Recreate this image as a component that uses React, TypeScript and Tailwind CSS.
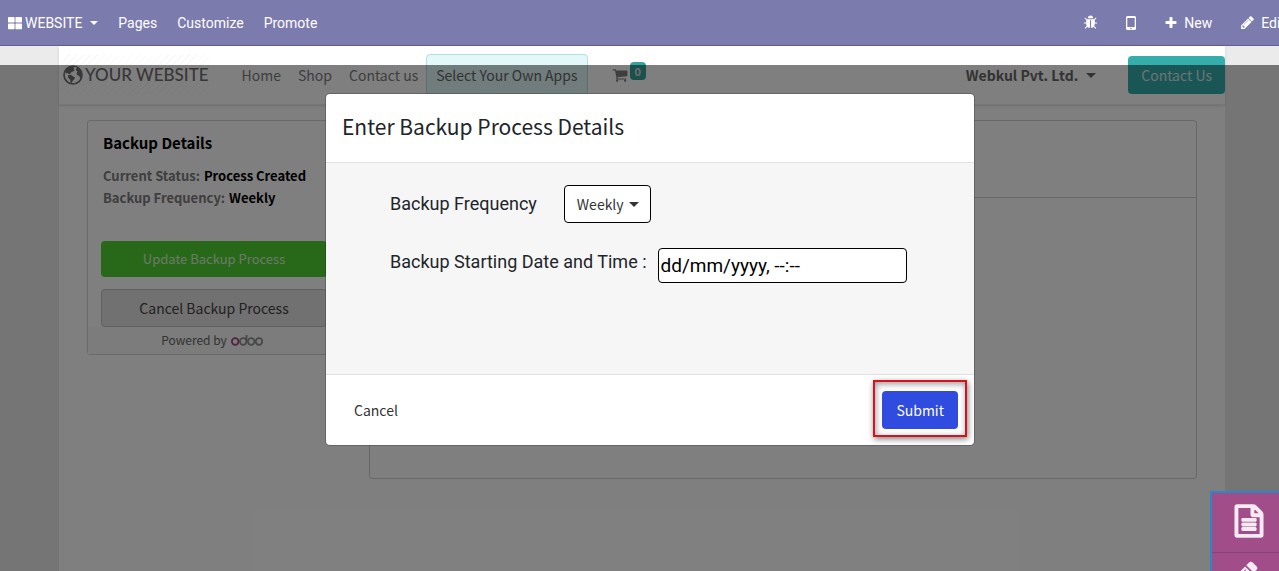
import React from "react";
import { FaThLarge } from "react-icons/fa";

const SITE_FONT = "font-['Noto_Sans_CJK_SC',sans-serif]";

function Glyph({ d, className }: { d: string; className: string }) {
  return (
    <svg viewBox="0 0 1792 1792" fill="currentColor" aria-hidden="true" className={className}>
      <path d={d} />
    </svg>
  );
}

const BUG =
  "M1696 960q0 26-19 45t-45 19h-224q0 171-67 290l208 209q19 19 19 45t-19 45q-18 19-45 19t-45-19l-198-197q-5 5-15 13t-42 28.5-65 36.5-82 29-97 13v-896h-128v896q-51 0-101.5-13.5t-87-33-66-39-43.5-32.5l-15-14-183 207q-20 21-48 21-24 0-43-16-19-18-20.5-44.5t15.5-46.5l202-227q-58-114-58-274h-224q-26 0-45-19t-19-45 19-45 45-19h224v-294l-173-173q-19-19-19-45t19-45 45-19 45 19l173 173h844l173-173q19-19 45-19t45 19 19 45-19 45l-173 173v294h224q26 0 45 19t19 45zm-480-576h-640q0-133 93.5-226.5t226.5-93.5 226.5 93.5 93.5 226.5z";
const FILE =
  "M1596 380q28 28 48 76t20 88v1152q0 40-28 68t-68 28h-1344q-40 0-68-28t-28-68v-1600q0-40 28-68t68-28h896q40 0 88 20t76 48zm-444-244v376h376q-10-29-22-41l-313-313q-12-12-41-22zm384 1528v-1024h-416q-40 0-68-28t-28-68v-416h-768v1536h1280zm-1024-864q0-14 9-23t23-9h704q14 0 23 9t9 23v64q0 14-9 23t-23 9h-704q-14 0-23-9t-9-23v-64zm736 224q14 0 23 9t9 23v64q0 14-9 23t-23 9h-704q-14 0-23-9t-9-23v-64q0-14 9-23t23-9h704zm0 256q14 0 23 9t9 23v64q0 14-9 23t-23 9h-704q-14 0-23-9t-9-23v-64q0-14 9-23t23-9h704z";
const CART =
  "M704 1536q0 52-38 90t-90 38-90-38-38-90 38-90 90-38 90 38 38 90zm896 0q0 52-38 90t-90 38-90-38-38-90 38-90 90-38 90 38 38 90zm128-1088v512q0 24-16.5 42.5t-40.5 21.5l-1044 122q13 60 13 70 0 16-24 64h920q26 0 45 19t19 45-19 45-45 19h-1024q-26 0-45-19t-19-45q0-11 8-31.5t16-36 21.5-40 15.5-29.5l-177-823h-204q-26 0-45-19t-19-45 19-45 45-19h256q16 0 28.5 6.5t19.5 15.5 13 24.5 8 26 5.5 29.5 4.5 26h1201q26 0 45 19t19 45z";
const PENCIL =
  "M491 1536l91-91-235-235-91 91v107h128v128h107zm523-928q0-22-22-22-10 0-17 7l-542 542q-7 7-7 17 0 22 22 22 10 0 17-7l542-542q7-7 7-17zm-54-192l416 416-832 832h-416v-416zm683 96q0 53-37 90l-166 166-416-416 166-165q36-38 90-38 53 0 91 38l235 234q37 39 37 91z";
const PLUS =
  "M1600 736v192q0 40-28 68t-68 28h-416v416q0 40-28 68t-68 28h-192q-40 0-68-28t-28-68v-416h-416q-40 0-68-28t-28-68v-192q0-40 28-68t68-28h416v-416q0-40 28-68t68-28h192q40 0 68 28t28 68v416h416q40 0 68 28t28 68z";

function Caret({ className = "" }: { className?: string }) {
  return (
    <svg viewBox="0 0 10 5" fill="currentColor" aria-hidden="true" className={`shrink-0 ${className}`}>
      <path d="M0 0h10L5 5z" />
    </svg>
  );
}

function TopBar() {
  return (
    <nav className="flex h-[46px] shrink-0 items-center justify-between border-b border-[#5f5e97] bg-[#7c7bad] pl-2 font-[Roboto,sans-serif] text-sm text-white">
      <div className="flex items-center gap-5">
        <button className="flex items-center">
          <FaThLarge className="mr-[3px] size-[14px]" />
          WEBSITE
          <Caret className="ml-2 h-1 w-2" />
        </button>
        <a href="#pages">Pages</a>
        <a href="#customize">Customize</a>
        <a href="#promote">Promote</a>
      </div>
      <div className="-mr-[6px] flex items-center">
        <button aria-label="Debug" className="mr-7">
          <Glyph d={BUG} className="size-[15px]" />
        </button>
        <button aria-label="Mobile preview" className="mr-7">
          <svg viewBox="0 0 10 14" className="h-[14px] w-[10px]" aria-hidden="true">
            <path
              fill="currentColor"
              fillRule="evenodd"
              d="M1.5 0h7A1.5 1.5 0 0 1 10 1.5v11A1.5 1.5 0 0 1 8.500 14h-7A1.5 1.5 0 0 1 0 12.500v-11A1.500 1.500 0 0 1 1.500 0zM1.300 2v9h7.400V2zM5 11.700a.8.8 0 1 0 0 1.600.8.8 0 0 0 0-1.600z"
            />
          </svg>
        </button>
        <button className="mr-7 flex items-center gap-[6px]">
          <Glyph d={PLUS} className="size-[14px]" />
          New
        </button>
        <button className="flex items-center gap-[6px]">
          <Glyph d={PENCIL} className="size-[15px]" />
          Edit
        </button>
      </div>
    </nav>
  );
}

function SiteHeader() {
  return (
    <header className="flex h-[59px] items-center justify-between border-b border-[#ececec] pl-1 text-sm text-[#7c7c7c] shadow-sm">
      <div className="flex items-center">
        <a
          href="#home"
          className="mr-[33px] flex h-10 items-center gap-[2px] bg-[repeating-linear-gradient(135deg,#fff_0_4px,#f8f8f8_4px_5px)] font-[Lato,sans-serif] text-[17px] text-[#6e6e6e]"
        >
          <svg viewBox="0 0 20 20" className="size-5" aria-hidden="true">
            <circle cx="10" cy="10" r="9" fill="none" stroke="currentColor" strokeWidth="1.600" />
            <path
              fill="currentColor"
              d="M2.500 6 5.500 2.500l3.500-1 2.500 1-.8 1.500 1 1-1.700 1.600-1.800.6-.8 1.500-1.400.5-1.500-1.200-1.800.6zM4.800 10.200l3-.4 2.200 1.400 1.800 1-.4 2-1.500 1.200-1 2.300-1.100.2-.8-3.300-1.700-1.600zM13 3.200l2-.3 2.400 2.600 1.200 3.300-.1 3-1.300 2.300-.9-3.200-1.700-.6-1.200-1.900 1.100-1.800-1.500-1z"
            />
          </svg>
          <span className="font-medium">YOUR WEBSITE</span>
        </a>
        <nav className="flex items-center gap-[17px]">
          <a href="#home">Home</a>
          <a href="#shop">Shop</a>
          <a href="#contact">Contact us</a>
        </nav>
        <a
          href="#apps"
          className="ml-2 rounded border border-[#b3dfde] bg-[#e2f8f9] px-[9px] py-[10px] text-[#666]"
        >
          Select Your Own Apps
        </a>
        <a href="#cart" aria-label="Cart" className="ml-6 flex items-center gap-[2px]">
          <Glyph d={CART} className="size-4" />
          <span className="mb-2 rounded bg-[#35a39b] px-[5px] text-[11px] leading-[18px] font-bold text-[#ddd]">0</span>
        </a>
      </div>
      <div className="flex items-center gap-8">
        <button className="flex items-center gap-2 font-bold text-[#666]">
          Webkul Pvt. Ltd.
          <Caret className="h-[5px] w-[10px]" />
        </button>
        <button className="h-[38px] rounded bg-[#35adab] px-[13px] text-[#d8e8e8]">Contact Us</button>
      </div>
    </header>
  );
}

function OdooLogo() {
  return (
    <svg viewBox="0 0 32 12" className="h-3 w-8" role="img" aria-label="odoo" fill="none" strokeWidth="1.800">
      <circle cx="4.200" cy="7.500" r="3.300" stroke="#a24689" />
      <g stroke="#8f8f8f">
        <circle cx="12.200" cy="7.500" r="3.300" />
        <path d="M15.500 7.500V1" />
        <circle cx="20.200" cy="7.500" r="3.300" />
        <circle cx="28" cy="7.500" r="3.300" />
      </g>
    </svg>
  );
}

function BackupCard() {
  return (
    <section className="w-[254px] shrink-0 rounded-[3px] border border-[#d5d5d5]">
      <div className="px-[13px] pt-2">
        <div className="px-[2px]">
          <h2 className="text-[15px] leading-7 font-bold text-black">Backup Details</h2>
          <dl className="mt-2 text-[13px] leading-[22px] font-bold text-black">
            <div className="flex gap-1">
              <dt className="text-[#7c7c7c]">Current Status:</dt>
              <dd>Process Created</dd>
            </div>
            <div className="flex gap-1">
              <dt className="text-[#7c7c7c]">Backup Frequency:</dt>
              <dd>Weekly</dd>
            </div>
          </dl>
        </div>
        <button className="mt-8 block h-9 w-full rounded bg-[#50d233] text-[13px] text-[#d9f2d3]">
          Update Backup Process
        </button>
        <button className="mt-3 block h-[38px] w-full rounded border border-[#c0c0c0] bg-[#e2e2e2] text-sm text-[#444]">
          Cancel Backup Process
        </button>
      </div>
      <footer className="flex h-[27px] items-center justify-center gap-1 bg-[#f8f8f8] pr-1 pb-[2px] text-xs text-[#666]">
        Powered by
        <OdooLogo />
      </footer>
    </section>
  );
}

function BackupDialog() {
  return (
    <div
      role="dialog"
      aria-labelledby="dialog-title"
      className="w-full max-w-[648px] overflow-hidden rounded bg-white text-base text-[#333] shadow-[0_0_0_1px_rgba(0,0,0,0.2)]"
    >
      <header className="border-b border-[#dee2e6] px-4 pt-4 pb-5">
        <h1 id="dialog-title" className="text-[21px] leading-8 text-[#212529]">
          Enter Backup Process Details
        </h1>
      </header>
      <div className="flex h-[211px] flex-col gap-[25px] bg-[#f6f6f6] px-16 pt-[22px]">
        <div className="flex items-center gap-[27px]">
          <label htmlFor="frequency" className="font-[Roboto,sans-serif] text-lg text-[#212529]">
            Backup Frequency
          </label>
          <div className="grid h-[38px] w-[87px] items-center">
            <select
              id="frequency"
              className="col-start-1 row-start-1 h-full w-full appearance-none rounded border border-black bg-white pl-3 text-sm"
            >
              <option>Weekly</option>
            </select>
            <Caret className="pointer-events-none col-start-1 row-start-1 mr-3 h-[5px] w-[10px] justify-self-end" />
          </div>
        </div>
        <div className="flex items-start gap-[11px]">
          <label htmlFor="start" className="font-[Roboto,sans-serif] text-lg text-[#212529]">
            Backup Starting Date and Time :
          </label>
          <input
            id="start"
            type="text"
            placeholder="dd/mm/yyyy, --:--"
            className="h-[35px] w-[249px] rounded border border-black bg-white px-[2px] font-[Roboto,sans-serif] text-[19px] text-black placeholder:text-black"
          />
        </div>
      </div>
      <footer className="flex items-center justify-between border-t border-[#dee2e6] pt-[5px] pr-[7px] pb-2 pl-4">
        <button className="px-3 pt-[3px] text-sm">Cancel</button>
        <div className="border-2 border-[#d8121c] px-[7px] pt-[9px] pb-[6px] shadow-[1px_2px_6px_rgba(0,0,0,0.5),inset_1px_2px_6px_rgba(0,0,0,0.4)]">
          <button className="block h-[38px] rounded bg-[#2f4be0] px-[14px] text-sm text-white">Submit</button>
        </div>
      </footer>
    </div>
  );
}

function SideTools() {
  return (
    <aside className="absolute right-0 bottom-0 h-20 w-[69px] overflow-hidden border-t-2 border-l-2 border-[#2e86c8] bg-[#a04d8a] text-[#f6eaf3]">
      <button aria-label="Documents" className="flex h-[60px] w-full items-center justify-center border-b border-[#86407a] pb-1 pl-[7px]">
        <Glyph d={FILE} className="size-8 overflow-visible stroke-current stroke-[90]" />
      </button>
      <button aria-label="Edit" className="flex w-full justify-center pt-[6px] pr-1">
        <Glyph d={PENCIL} className="size-8" />
      </button>
    </aside>
  );
}

export default function App() {
  return (
    <div className={`relative flex min-h-screen flex-col overflow-hidden bg-[#ebebeb] ${SITE_FONT}`}>
      <TopBar />
      <main className="mr-[54px] ml-[59px] flex-1 bg-white">
        <SiteHeader />
        <div className="flex items-start gap-7 py-[15px] pr-7 pl-7">
          <BackupCard />
          <section className="h-[359px] flex-1 rounded-[3px] border border-[#d0d0d0]">
            <div className="h-[77px] border-b border-[#d0d0d0]" />
          </section>
        </div>
      </main>
      <div className="absolute inset-x-0 top-[65px] bottom-0 flex items-start justify-center bg-black/50 pt-[29px] pl-[21px]">
        <BackupDialog />
      </div>
      <SideTools />
    </div>
  );
}
